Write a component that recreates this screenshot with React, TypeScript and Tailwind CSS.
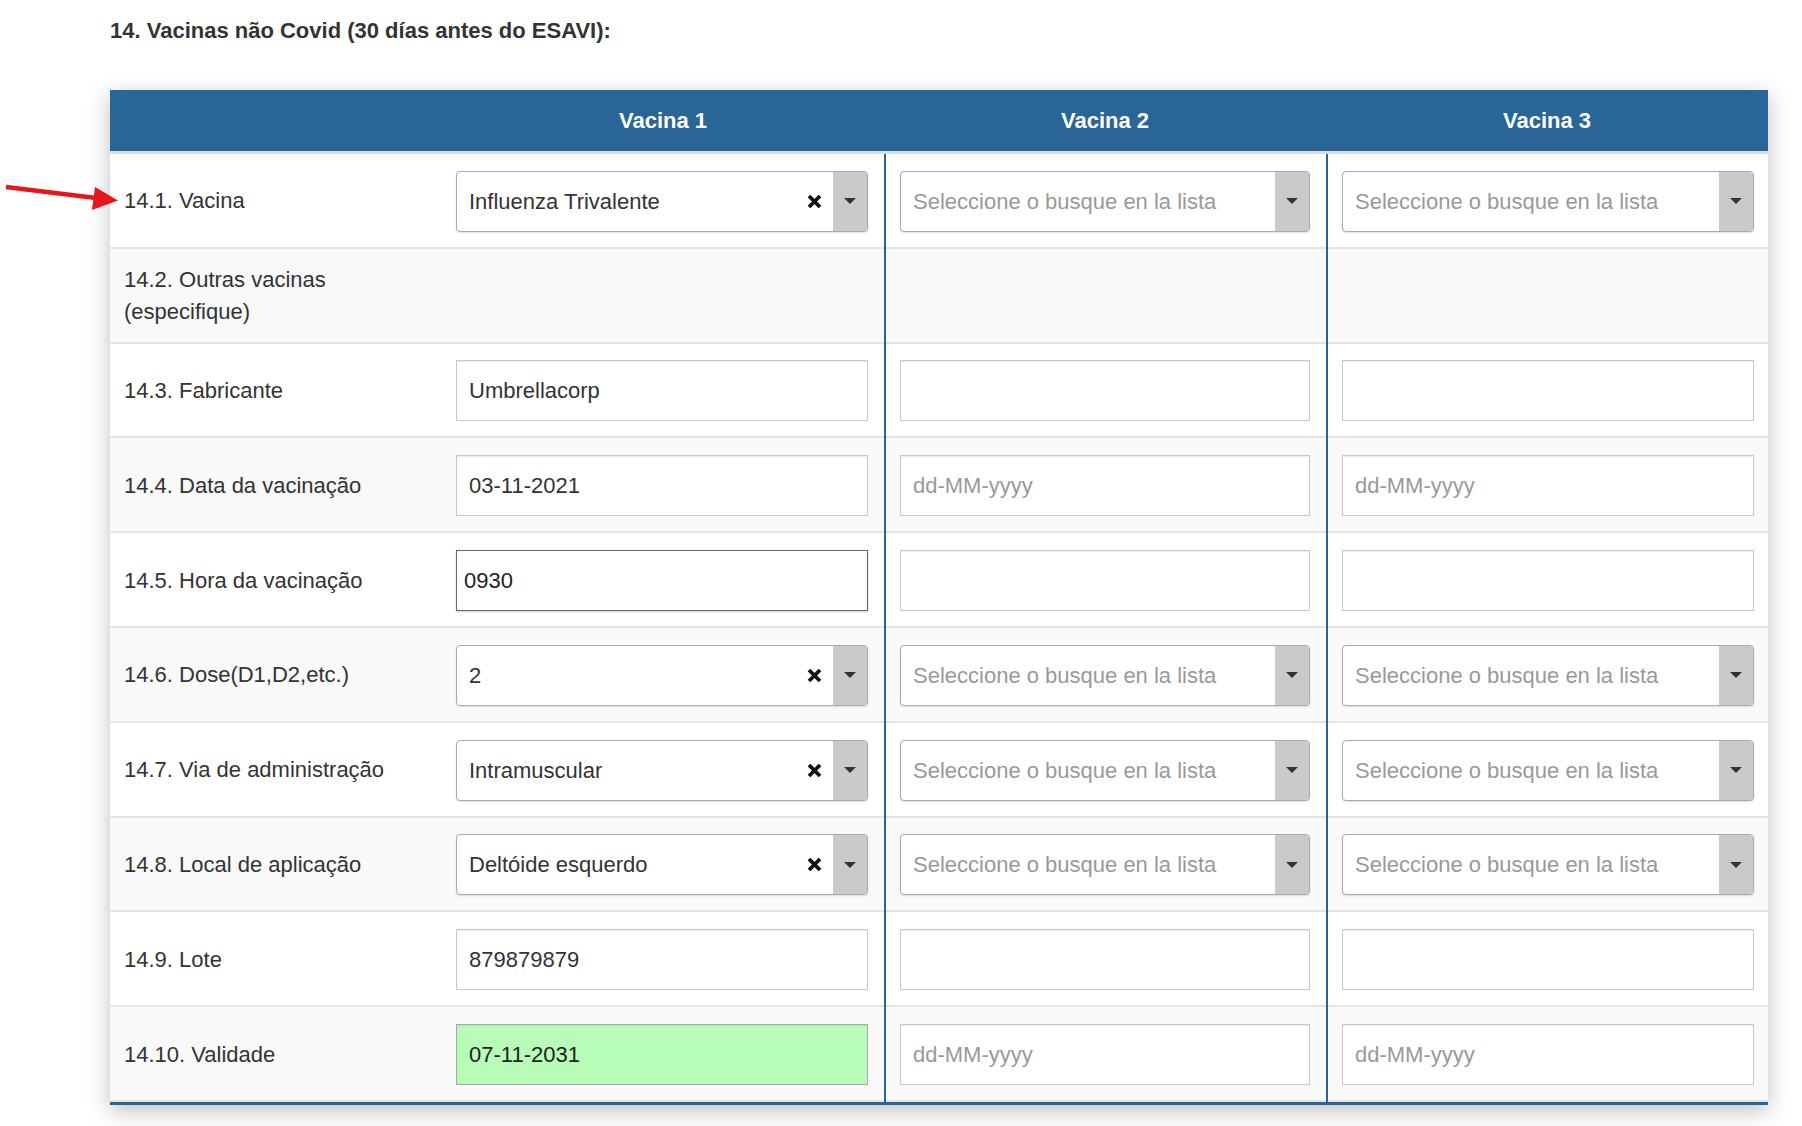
import React from 'react';

type Field =
  | { kind: 'select'; value?: string }
  | { kind: 'text'; value?: string; placeholder?: string; focused?: boolean; valid?: boolean }
  | { kind: 'none' };

type Row = { label: string; cells: Field[] };

const emptySelect: Field = { kind: 'select' };
const emptyText: Field = { kind: 'text' };
const emptyDate: Field = { kind: 'text', placeholder: 'dd-MM-yyyy' };

const rows: Row[] = [
  { label: '14.1. Vacina', cells: [{ kind: 'select', value: 'Influenza Trivalente' }, emptySelect, emptySelect] },
  { label: '14.2. Outras vacinas (especifique)', cells: [{ kind: 'none' }, { kind: 'none' }, { kind: 'none' }] },
  { label: '14.3. Fabricante', cells: [{ kind: 'text', value: 'Umbrellacorp' }, emptyText, emptyText] },
  { label: '14.4. Data da vacinação', cells: [{ kind: 'text', value: '03-11-2021' }, emptyDate, emptyDate] },
  { label: '14.5. Hora da vacinação', cells: [{ kind: 'text', value: '0930', focused: true }, emptyText, emptyText] },
  { label: '14.6. Dose(D1,D2,etc.)', cells: [{ kind: 'select', value: '2' }, emptySelect, emptySelect] },
  { label: '14.7. Via de administração', cells: [{ kind: 'select', value: 'Intramuscular' }, emptySelect, emptySelect] },
  { label: '14.8. Local de aplicação', cells: [{ kind: 'select', value: 'Deltóide esquerdo' }, emptySelect, emptySelect] },
  { label: '14.9. Lote', cells: [{ kind: 'text', value: '879879879' }, emptyText, emptyText] },
  { label: '14.10. Validade', cells: [{ kind: 'text', value: '07-11-2031', valid: true }, emptyDate, emptyDate] },
];

const ClearIcon = () => (
  <svg width="15" height="15" viewBox="0 0 15 15">
    <path d="M2 2 L13 13 M13 2 L2 13" stroke="#111" strokeWidth="3.8" strokeLinecap="butt" />
  </svg>
);

const Caret = () => (
  <svg width="12" height="6" viewBox="0 0 12 6">
    <path d="M0 0 H12 L6 6 Z" fill="#333" />
  </svg>
);

const SelectBox: React.FC<{ value?: string }> = ({ value }) => (
  <div className="flex h-[61px] w-full items-stretch overflow-hidden rounded-[4px] border border-[#aaa] bg-white shadow-[0_1px_2px_rgba(0,0,0,0.12)]">
    <span className={value ? 'flex flex-1 items-center truncate pl-[12px] text-[#333]' : 'flex flex-1 items-center truncate pl-[12px] text-[#999]'}>
      {value ?? 'Seleccione o busque en la lista'}
    </span>
    {value && (
      <span className="flex items-center pr-[11px]">
        <ClearIcon />
      </span>
    )}
    <span className="flex w-[34px] items-center justify-center bg-[#cacaca]">
      <Caret />
    </span>
  </div>
);

const TextBox: React.FC<{ value?: string; placeholder?: string; focused?: boolean; valid?: boolean }> = ({
  value,
  placeholder,
  focused,
  valid,
}) => {
  let cls =
    'h-[61px] w-full border border-[#c8c8c8] bg-white px-[12px] text-[22px] text-[#333] outline-none placeholder:text-[#999] shadow-[inset_0_1px_1px_rgba(0,0,0,0.08)]';
  if (focused)
    cls =
      'h-[61px] w-full border border-[#666] bg-white px-[7px] text-[22px] text-[#222] outline-none shadow-[0_1px_2px_rgba(0,0,0,0.2)]';
  if (valid)
    cls =
      'h-[61px] w-full border border-[#aaa] bg-[#b7fcb7] px-[12px] text-[22px] text-[#222] outline-none shadow-[inset_0_1px_1px_rgba(0,0,0,0.08)]';
  return <input readOnly className={cls} value={value ?? ''} placeholder={placeholder} />;
};

const FieldCell: React.FC<{ field: Field }> = ({ field }) => {
  if (field.kind === 'select') return <SelectBox value={field.value} />;
  if (field.kind === 'text')
    return <TextBox value={field.value} placeholder={field.placeholder} focused={field.focused} valid={field.valid} />;
  return null;
};

const Arrow = () => (
  <svg className="absolute left-0 top-[177px]" width="124" height="36" viewBox="0 0 124 36">
    <line x1="6" y1="10" x2="96" y2="21" stroke="#e8161b" strokeWidth="4.5" />
    <polygon points="118,23.5 95,10 92,33" fill="#e8161b" />
  </svg>
);

export default function App() {
  return (
    <div className="relative min-h-screen bg-white pl-[110px] pt-[15px] font-['Liberation_Sans',Arial,sans-serif] text-[22px] text-[#333]">
      <Arrow />
      <h2 className="text-[22px] font-bold leading-[31px] text-[#333]">14. Vacinas não Covid (30 días antes do ESAVI):</h2>

      <div className="mt-[44px] w-[1658px] border-b-[3px] border-[#2a6496] shadow-[0_6px_22px_rgba(0,0,0,0.25)]">
        {/* header */}
        <div className="flex h-[64px] border-b-[3px] border-[#dcdcdc] bg-[#296596] font-bold text-white">
          <div className="w-[332px]" />
          <div className="flex w-[442px] items-center justify-center">Vacina 1</div>
          <div className="flex w-[442px] items-center justify-center">Vacina 2</div>
          <div className="flex w-[442px] items-center justify-center">Vacina 3</div>
        </div>

        {rows.map((row, i) => (
          <div
            key={row.label}
            className={
              i % 2 === 0
                ? 'flex h-[94.8px] bg-white shadow-[inset_0_-2px_0_#e4e4e4]'
                : 'flex h-[94.8px] bg-[#f9f9f9] shadow-[inset_0_-2px_0_#e4e4e4]'
            }
          >
            <div className="flex w-[332px] items-center pl-[14px] pr-[20px] leading-[32px]">{row.label}</div>
            <div className="flex w-[442px] items-center pl-[14px] pr-[16px]">
              <FieldCell field={row.cells[0]} />
            </div>
            <div className="flex w-[442px] items-center border-l-2 border-[#2a6496] pl-[14px] pr-[16px]">
              <FieldCell field={row.cells[1]} />
            </div>
            <div className="flex w-[442px] items-center border-l-2 border-[#2a6496] pl-[14px] pr-[14px]">
              <FieldCell field={row.cells[2]} />
            </div>
          </div>
        ))}
      </div>
    </div>
  );
}
